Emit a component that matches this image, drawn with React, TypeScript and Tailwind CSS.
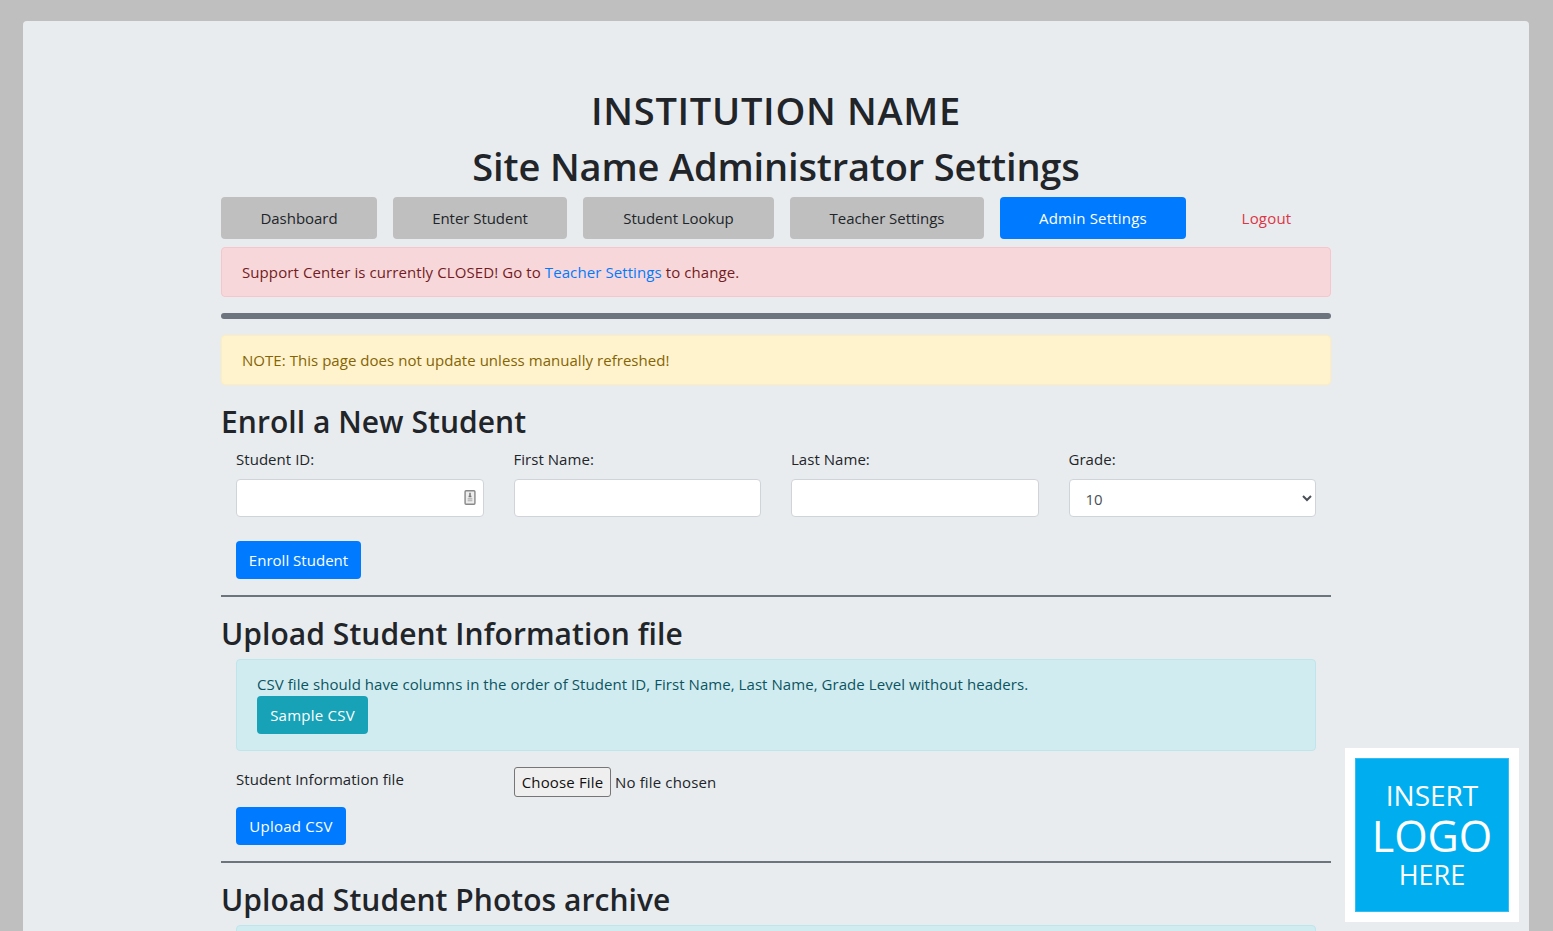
const navItems = [
  { label: "Dashboard", width: "w-[156px]" },
  { label: "Enter Student", width: "w-[174px]" },
  { label: "Student Lookup", width: "w-[191px]" },
  { label: "Teacher Settings", width: "w-[194px]" },
];

const inputClass = "h-[38px] w-full rounded border border-[#ced4da] bg-white";
const h2Class = "text-[30px] leading-[38px] font-semibold tracking-[0.05px]";

function Field({ label, children }: { label: string; children: React.ReactNode }) {
  return (
    <div className="w-[247.5px]">
      <label className="mb-2 block h-6 leading-6">{label}</label>
      {children}
    </div>
  );
}

function IdIcon() {
  return (
    <svg viewBox="0 0 12 16" className="absolute top-[11px] right-[8px] h-[15px] w-3">
      <rect x="0.75" y="0.75" width="10.5" height="14.5" rx="1" fill="#eee" stroke="#888" strokeWidth="1.5" />
      <path d="M6 3v4M4.5 7h3" stroke="#777" strokeWidth="1.6" />
      <path d="M3.5 9.5h5M3.5 11.5h5" stroke="#aaa" strokeWidth="1.2" />
    </svg>
  );
}

export default function App() {
  return (
    <div className="h-[931px] overflow-hidden bg-[#bfbfbf] px-[23px] pt-[21px] font-['Open_Sans','Noto_Sans',sans-serif] text-[15px] tracking-[0.04px] text-[#212529]">
      <div className="relative flex h-[1200px] w-[1506px] justify-center rounded-t bg-[#e9ecef] pt-[65px]">
        <div className="w-[1110px]">
          <h1 className="mb-2 text-center text-[38px] leading-[48px] font-semibold tracking-[0.7px]">INSTITUTION NAME</h1>
          <h1 className="mb-[7px] text-center text-[38px] leading-[48px] font-semibold tracking-[-0.15px]">Site Name Administrator Settings</h1>

          <nav className="flex gap-4 tracking-[-0.04px]">
            {navItems.map((n) => (
              <button key={n.label} className={`h-[42px] rounded ${n.width} bg-[#bfbfbf]`}>
                {n.label}
              </button>
            ))}
            <button className="h-[42px] w-[186px] rounded bg-[#007bff] tracking-[0.2px] text-white">Admin Settings</button>
            <button className="h-[42px] w-[129px] tracking-[0.2px] text-[#dc3545]">Logout</button>
          </nav>

          <div className="mt-2 h-[50px] rounded border border-[#f5c6cb] bg-[#f8d7da] px-5 leading-[48px] tracking-[0.09px] text-[#721c24]">
            Support Center is currently CLOSED! Go to <a className="text-[#007bff]">Teacher Settings</a> to change.
          </div>

          <hr className="my-4 h-[6px] rounded border-0 bg-[#6c757d]" />

          <div className="h-[50px] rounded border border-[#ffeeba] bg-[#fff3cd] px-5 leading-[48px] text-[#856404]">
            NOTE: This page does not update unless manually refreshed!
          </div>

          <h2 className={`mt-[18px] mb-[6px] ${h2Class}`}>Enroll a New Student</h2>
          <div className="px-[15px]">
            <div className="flex justify-between">
              <Field label="Student ID:">
                <div className="relative">
                  <input className={inputClass} />
                  <IdIcon />
                </div>
              </Field>
              <Field label="First Name:">
                <input className={inputClass} />
              </Field>
              <Field label="Last Name:">
                <input className={inputClass} />
              </Field>
              <Field label="Grade:">
                <select className={`${inputClass} pt-[1px] pl-3 text-[#495057]`} defaultValue="10">
                  <option>10</option>
                </select>
              </Field>
            </div>
            <button className="mt-6 h-[38px] w-[125px] rounded bg-[#007bff] tracking-[0.02px] text-white">Enroll Student</button>
          </div>

          <hr className="mt-4 mb-[18px] h-0.5 border-0 bg-[#6c757d]" />

          <h2 className={`mb-[6px] ${h2Class}`}>Upload Student Information file</h2>
          <div className="px-[15px]">
            <div className="h-[92px] rounded border border-[#bee5eb] bg-[#d1ecf1] px-5 pt-[12px] tracking-[0.06px] text-[#0c5460]">
              <p className="leading-6">CSV file should have columns in the order of Student ID, First Name, Last Name, Grade Level without headers.</p>
              <button className="h-[38px] w-[111px] rounded bg-[#17a2b8] tracking-[0.24px] text-white">Sample CSV</button>
            </div>
            <div className="mt-4 flex">
              <label className="h-6 w-[278px] leading-6">Student Information file</label>
              <div className="flex h-[30px] items-center tracking-[0.15px]">
                <button className="h-[30px] w-[97px] rounded-[3px] border border-[#767676] bg-[#efefef] text-[#111]">Choose File</button>
                <span className="ml-[4px]">No file chosen</span>
              </div>
            </div>
            <button className="mt-[10px] h-[38px] w-[110px] rounded bg-[#007bff] tracking-[0.24px] text-white">Upload CSV</button>
          </div>

          <hr className="mt-4 mb-[18px] h-0.5 border-0 bg-[#6c757d]" />

          <h2 className={`mb-[6px] ${h2Class}`}>Upload Student Photos archive</h2>
          <div className="px-[15px]">
            <div className="h-[92px] rounded border border-[#bee5eb] bg-[#d1ecf1]" />
          </div>
        </div>

        <div className="absolute top-[727px] left-[1322px] h-[174px] w-[174px] bg-white p-[10px]">
          <div className="flex h-full w-full flex-col items-center justify-center border border-[#33bdf2] bg-[#00aeef] pb-[3px] text-white">
            <span className="text-[28px] leading-[36px] tracking-normal">INSERT</span>
            <span className="text-[43px] leading-[46px] tracking-normal">LOGO</span>
            <span className="text-[27px] leading-[32px] tracking-normal">HERE</span>
          </div>
        </div>
      </div>
    </div>
  );
}
